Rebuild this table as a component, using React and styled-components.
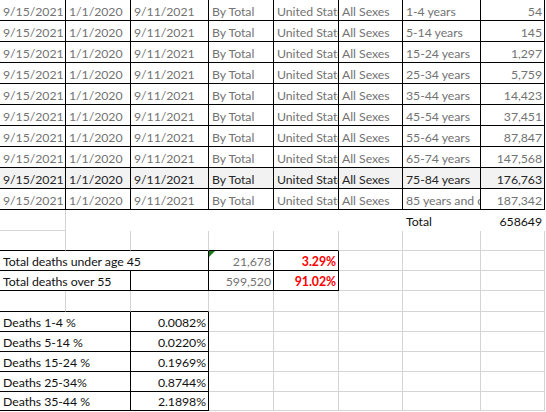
import React from "react";
import styled, { createGlobalStyle } from "styled-components";

const Global = createGlobalStyle`
  html, body { margin: 0; padding: 0; background: #fff; }
  body { overflow: hidden; }
`;

const BORDER = { k: "#000", g: "#d4d4d4", n: "transparent" };
const TEXT = { gray: "#737373", dark: "#262626", black: "#111", red: "#ff0000" };

const Sheet = styled.div`
  display: grid;
  grid-template-columns: 66px 65px 78px 65px 65px 64px 78px 64px;
  grid-template-rows: repeat(10, 21px) 20.7px 20.6px 20px 20px 20.7px 20px 20px 20px 20px 19.5px;
  width: 545px;
  font-family: Lato, "Open Sans", sans-serif;
  font-size: 12.3px;
  letter-spacing: -0.05px;
`;

const Cell = styled.div`
  box-sizing: border-box;
  grid-column: span ${(p) => p.$span || 1};
  border-right: 1px solid ${(p) => BORDER[p.$r || "g"]};
  border-bottom: 1px solid ${(p) => BORDER[p.$b || "g"]};
  background: ${(p) => p.$bg || "#fff"};
  color: ${(p) => TEXT[p.$c || "black"]};
  font-weight: ${(p) => (p.$bold ? 700 : 400)};
  padding: 0 ${(p) => (p.$right ? "2px" : "0")} 0 3px;
  white-space: nowrap;
  overflow: hidden;
  display: flex;
  align-items: flex-end;
  justify-content: ${(p) => (p.$right ? "flex-end" : "flex-start")};
  line-height: 17px;
  position: relative;
`;

const Flag = styled.span`
  position: absolute;
  left: 0;
  top: 0;
  width: 0;
  height: 0;
  border-top: 6px solid #1b7a1b;
  border-right: 6px solid transparent;
`;

const dataRows = [
  ["1-4 years", "54"],
  ["5-14 years", "145"],
  ["15-24 years", "1,297"],
  ["25-34 years", "5,759"],
  ["35-44 years", "14,423"],
  ["45-54 years", "37,451"],
  ["55-64 years", "87,847"],
  ["65-74 years", "147,568"],
  ["75-84 years", "176,763"],
  ["85 years and older", "187,342"],
];

const pctRows = [
  ["Deaths 1-4 %", "0.0082%"],
  ["Deaths 5-14 %", "0.0220%"],
  ["Deaths 15-24 %", "0.1969%"],
  ["Deaths 25-34%", "0.8744%"],
  ["Deaths 35-44 %", "2.1898%"],
];

function DataRow({ age, count, active }) {
  const c = active ? "dark" : "gray";
  const bg = active ? "#f2f2f2" : "#fff";
  const vals = ["9/15/2021", "1/1/2020", "9/11/2021", "By Total", "United States", "All Sexes", age];
  return (
    <>
      {vals.map((v, i) => (
        <Cell key={i} $r="k" $b="k" $c={c} $bg={bg}>
          {v}
        </Cell>
      ))}
      <Cell $r="k" $b="k" $c={c} $bg={bg} $right>
        {count}
      </Cell>
    </>
  );
}

function Blank({ n, r, b }) {
  return Array.from({ length: n }, (_, i) => <Cell key={i} $r={r} $b={b} />);
}

export default function App() {
  return (
    <>
      <Global />
      <Sheet>
        {dataRows.map(([a, n], i) => (
          <DataRow key={i} age={a} count={n} active={i === 8} />
        ))}

        {/* row 11 */}
        <Cell />
        <Blank n={5} r="n" b="n" />
        <Cell $r="n" $b="n">Total</Cell>
        <Cell $r="n" $b="n" $right>658649</Cell>

        {/* row 12 */}
        <Blank n={5} r="g" b="k" />
        <Blank n={3} />

        {/* row 13 */}
        <Cell $span={3} $r="k" $b="k">Total deaths under age 45</Cell>
        <Cell $r="k" $b="k" $c="gray" $right>
          <Flag />
          21,678
        </Cell>
        <Cell $r="k" $b="k" $c="red" $bold $right>3.29%</Cell>
        <Blank n={3} />

        {/* row 14 */}
        <Cell $span={2} $r="k" $b="k">Total deaths over 55</Cell>
        <Cell $r="k" $b="k" />
        <Cell $r="k" $b="k" $c="gray" $right>599,520</Cell>
        <Cell $r="k" $b="k" $c="red" $bold $right>91.02%</Cell>
        <Blank n={3} />

        {/* row 15 */}
        <Blank n={3} r="g" b="k" />
        <Blank n={5} />

        {pctRows.map(([l, v], i) => (
          <React.Fragment key={i}>
            <Cell $span={2} $r="k" $b="k">{l}</Cell>
            <Cell $r="k" $b="k" $right>{v}</Cell>
            <Blank n={5} />
          </React.Fragment>
        ))}
      </Sheet>
    </>
  );
}
